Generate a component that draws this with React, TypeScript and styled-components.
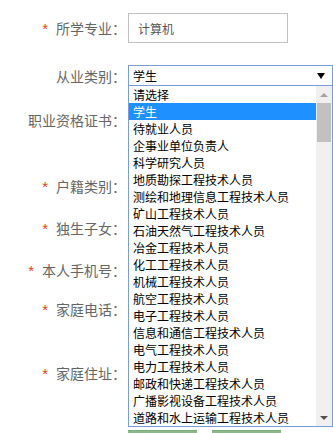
import React from "react";
import styled, { createGlobalStyle } from "styled-components";

const Global = createGlobalStyle`
  html, body { margin: 0; padding: 0; background: #fff; }
  body { font-family: "Noto Sans CJK SC", "Liberation Sans", sans-serif; overflow: hidden; }
  * { box-sizing: border-box; }
`;

const Page = styled.div`
  width: 333px;
  height: 433px;
  overflow: hidden;
  padding-top: 13px;
`;

const Form = styled.div`
  display: flex;
  flex-direction: column;
`;

const Row = styled.div<{ $h: number; $mt: number }>`
  display: flex;
  align-items: center;
  height: ${(p) => p.$h}px;
  margin-top: ${(p) => p.$mt}px;
`;

const Label = styled.div`
  width: 126px;
  flex: none;
  text-align: right;
  font-size: 14px;
  color: #666;
  line-height: 16px;
  white-space: nowrap;
  margin-right: 2px;
`;

const Star = styled.span`
  color: #f03c14;
  font-family: "Liberation Sans", sans-serif;
  font-size: 15px;
  margin-right: 8px;
`;

const TextInput = styled.div`
  width: 160px;
  height: 30px;
  border: 1px solid #c0c0c0;
  display: flex;
  align-items: center;
  padding-left: 9px;
  font-size: 12px;
  color: #555;
`;

const FieldWrap = styled.div`
  position: relative;
`;

const SelectBox = styled.div`
  width: 205px;
  height: 21px;
  border: 1px solid #7b9cd8;
  display: flex;
  align-items: center;
  justify-content: space-between;
  padding: 0 7px 0 4px;
  font-size: 12px;
  color: #000;
`;

const Caret = styled.span`
  width: 0;
  height: 0;
  border-left: 4px solid transparent;
  border-right: 4px solid transparent;
  border-top: 6px solid #000;
`;

const DropList = styled.div`
  position: absolute;
  top: 100%;
  left: 0;
  width: 205px;
  height: 341px;
  border: 1px solid #7b9cd8;
  border-top: none;
  background: #fff;
  display: flex;
  z-index: 5;
`;

const Options = styled.div`
  flex: 1;
  display: flex;
  flex-direction: column;
  overflow: hidden;
`;

const Option = styled.div<{ $active?: boolean }>`
  height: 17px;
  line-height: 17px;
  padding-left: 4px;
  font-size: 12px;
  white-space: nowrap;
  color: ${(p) => (p.$active ? "#fff" : "#000")};
  background: ${(p) => (p.$active ? "#1e90ff" : "transparent")};
`;

const Track = styled.div`
  width: 16px;
  flex: none;
  background: #f0f0f0;
  display: flex;
  flex-direction: column;
`;

const ArrowBtn = styled.div<{ $down?: boolean }>`
  height: 17px;
  display: flex;
  align-items: center;
  justify-content: center;
  &::after {
    content: "";
    width: 0;
    height: 0;
    border-left: 4px solid transparent;
    border-right: 4px solid transparent;
    ${(p) =>
      p.$down
        ? "border-top: 4px solid #505050;"
        : "border-bottom: 4px solid #a3a3a3;"}
  }
`;

const Thumb = styled.div`
  height: 39px;
  margin: 0 1px;
  background: #c1c1c1;
`;

const Spacer = styled.div`
  flex: 1;
`;

const Buttons = styled.div`
  display: flex;
  gap: 15px;
  margin-left: 128px;
  margin-top: 42px;
`;

const GreenButton = styled.div`
  width: 69px;
  height: 34px;
  background: #8cb98a;
  border-top: 1px solid #7eab7c;
`;

const options = [
  "请选择",
  "学生",
  "待就业人员",
  "企事业单位负责人",
  "科学研究人员",
  "地质勘探工程技术人员",
  "测绘和地理信息工程技术人员",
  "矿山工程技术人员",
  "石油天然气工程技术人员",
  "冶金工程技术人员",
  "化工工程技术人员",
  "机械工程技术人员",
  "航空工程技术人员",
  "电子工程技术人员",
  "信息和通信工程技术人员",
  "电气工程技术人员",
  "电力工程技术人员",
  "邮政和快递工程技术人员",
  "广播影视设备工程技术人员",
  "道路和水上运输工程技术人员",
];

const rows: { label: string; req: boolean; h: number; mt: number }[] = [
  { label: "职业资格证书：", req: false, h: 30, mt: 19 },
  { label: "户籍类别：", req: true, h: 30, mt: 36 },
  { label: "独生子女：", req: true, h: 30, mt: 12 },
  { label: "本人手机号：", req: true, h: 30, mt: 12 },
  { label: "家庭电话：", req: true, h: 30, mt: 9 },
  { label: "家庭住址：", req: true, h: 30, mt: 34 },
];

export default function App() {
  return (
    <Page>
      <Global />
      <Form>
        <Row $h={30} $mt={0}>
          <Label>
            <Star>*</Star>所学专业：
          </Label>
          <TextInput>计算机</TextInput>
        </Row>
        <Row $h={21} $mt={22}>
          <Label>从业类别：</Label>
          <FieldWrap>
            <SelectBox>
              <span>学生</span>
              <Caret />
            </SelectBox>
            <DropList>
              <Options>
                {options.map((o, i) => (
                  <Option key={o} $active={i === 1}>
                    {o}
                  </Option>
                ))}
              </Options>
              <Track>
                <ArrowBtn />
                <Thumb />
                <Spacer />
                <ArrowBtn $down />
              </Track>
            </DropList>
          </FieldWrap>
        </Row>
        {rows.map((r) => (
          <Row key={r.label} $h={r.h} $mt={r.mt}>
            <Label>
              {r.req && <Star>*</Star>}
              {r.label}
            </Label>
            <TextInput />
          </Row>
        ))}
        <Buttons>
          <GreenButton />
          <GreenButton />
        </Buttons>
      </Form>
    </Page>
  );
}
